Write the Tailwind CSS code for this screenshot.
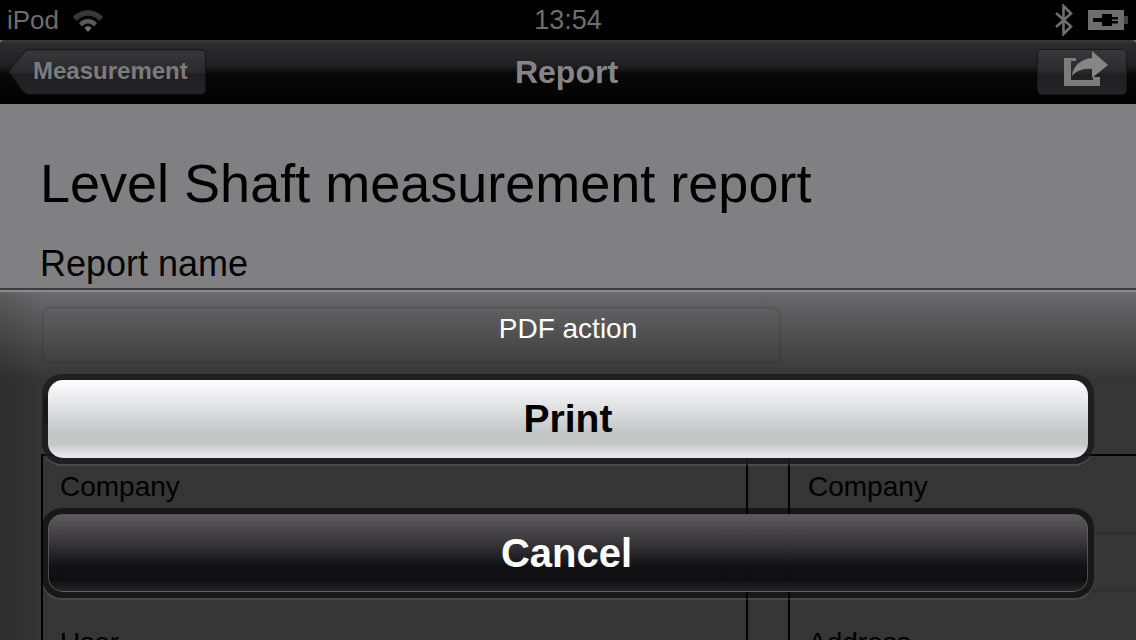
<!DOCTYPE html>
<html lang="en">
  <head>
    <meta charset="UTF-8" />
    <title>Report</title>
    <script src="https://cdn.jsdelivr.net/npm/@tailwindcss/browser@4"></script>
  </head>
  <body class="bg-black font-['Liberation_Sans',Arial,sans-serif]">
    <div class="relative w-[1136px] h-[640px] overflow-hidden flex flex-col bg-[#807f81]">
      <!-- Status bar -->
      <div class="h-10 shrink-0 bg-black flex items-center justify-between pl-[7px] pr-[8px] text-[#6e6e6e]">
        <div class="flex items-center gap-[13px]">
          <span class="text-[26px] leading-none">iPod</span>
          <svg width="32" height="24" viewBox="0 0 32 24" fill="currentColor">
            <path d="M1 9 C9 0 23 0 31 9 L27.5 13 C21 6 11 6 4.500 13 Z" fill="#383838" />
            <path d="M7 15 C12 9.500 20 9.500 25 15 L22 18.500 C18.500 14.500 13.500 14.500 10 18.500 Z" fill="#5a5a5a" />
            <path d="M12.500 20 C14.500 17.800 17.500 17.800 19.500 20 L16 24 Z" fill="#737373" />
          </svg>
        </div>
        <span class="absolute left-0 right-0 text-center text-[27px] leading-none">13:54</span>
        <div class="flex items-center gap-[14px]">
          <svg width="20" height="32" viewBox="0 0 20 32" fill="none" stroke="#6e6e6e" stroke-width="2.600">
            <path d="M2 9 L17 22.500 L9.500 30 V2 L17 9.500 L2 23" />
          </svg>
          <svg width="40" height="20" viewBox="0 0 40 20">
            <rect x="0" y="0" width="36" height="20" fill="#6e6e6e" />
            <rect x="36" y="6" width="4" height="8" fill="#454545" />
            <path d="M5 8 H14 V4 H24 V7 H30 V9.500 H24 V11 H30 V13.500 H24 V16 H14 V12 H5 Z" fill="#000" />
          </svg>
        </div>
      </div>

      <!-- Nav bar -->
      <div class="relative h-16 shrink-0 rounded-t-[4px] flex items-center justify-between pl-[8px] pr-[9px] bg-[linear-gradient(#3a393b_0px,#2c2b2d_4px,#201f21_26px,#070708_34px,#020202_100%)]">
        <div class="relative h-[46px] w-[198px]">
          <svg class="absolute inset-0" width="198" height="46" viewBox="0 0 198 46">
            <defs>
              <linearGradient id="back" x1="0" y1="0" x2="0" y2="1">
                <stop offset="0" stop-color="#38373a" />
                <stop offset="0.5" stop-color="#2a292b" />
                <stop offset="0.55" stop-color="#1f1e20" />
                <stop offset="1" stop-color="#252426" />
              </linearGradient>
            </defs>
            <path d="M0.500 23 L16 3 Q18 0.800 21 0.800 H192 Q197.500 0.800 197.500 5 V41 Q197.500 45.300 192 45.300 H21 Q18 45.300 16 43 Z" fill="url(#back)" stroke="#141315" stroke-width="1" />
          </svg>
          <span class="absolute left-[25px] top-[8px] text-[24px] leading-[28px] font-bold text-[#7c7c7c]">Measurement</span>
        </div>
        <span class="absolute left-0 right-0 pr-[3px] text-center text-[32px] leading-none font-bold text-[#858585] pointer-events-none">Report</span>
        <div class="h-[46px] w-[90px] rounded-[5px] border border-[#171618] flex items-start pl-[20px] bg-[linear-gradient(#38373a,#2a292b_50%,#1f1e20_55%,#252426)]">
          <svg width="52" height="44" viewBox="0 0 52 44" fill="#7c7c7c">
            <path d="M6 8 H18 V11 H13 V30 H35 V27 H42 V36 H6 Z" />
            <path d="M14 26 C15 15 24 9 34 8 V1 L50 15 L34 28 V19 C25 18 18 21 14 26 Z" fill="#868686" />
          </svg>
        </div>
      </div>

      <!-- Report page, dimmed behind the sheet -->
      <div class="flex-1 px-[41px] text-black">
        <h1 class="mt-[46px] -ml-px text-[54px] leading-[66px] whitespace-nowrap">Level Shaft measurement report</h1>
        <p class="mt-[28px] -ml-px text-[36px] leading-[40px] whitespace-nowrap">Report name</p>
        <div class="mt-[22px] w-[741px] h-[58px] rounded-[10px] border-[3px] border-[#767577]"></div>
        <p class="mt-[28px] text-[36px] leading-[40px] whitespace-nowrap">Data</p>
        <div class="mt-[22px] -mr-[41px] flex border-t-2 border-black">
          <div class="w-[707px] h-[300px] border-x-2 border-black pl-[17px] pr-[20px] pt-[14px]">
            <p class="text-[28px] leading-[34px]">Company</p>
            <div class="mt-[28px] h-[60px] rounded-[10px] border-[3px] border-[#767577]"></div>
            <p class="mt-[34px] text-[28px] leading-[34px]">User</p>
          </div>
          <div class="ml-[40px] flex-1 border-l-2 border-black pl-[18px] pt-[14px]">
            <p class="text-[28px] leading-[34px]">Company</p>
            <div class="mt-[28px] h-[60px] border-y-[3px] border-[#767577]"></div>
            <p class="mt-[34px] text-[28px] leading-[34px]">Address</p>
          </div>
        </div>
      </div>

      <!-- Action sheet -->
      <div class="absolute left-0 right-0 top-[288px] bottom-0 border-t-2 border-[#3c3b3d] bg-[linear-gradient(90deg,rgba(0,0,0,0.14),rgba(0,0,0,0)_44px),linear-gradient(rgba(0,0,0,0.12)_0px,rgba(0,0,0,0.2)_8px,rgba(0,0,0,0.58)_90px,rgba(0,0,0,0.58)_100%)] px-[42px]">
        <div class="-mx-[42px] h-[2px] bg-[#8a898b]"></div>
        <p class="mt-[20px] text-center text-[28px] leading-[34px] text-white">PDF action</p>
        <div class="mt-[28px] rounded-[20px] bg-[#1b1a1c]/85 p-[6px] shadow-[0_2px_0_rgba(255,255,255,0.1)]">
          <button class="w-full h-[78px] rounded-[15px] text-[39px] font-bold text-black bg-[linear-gradient(#fdfdfe,#f4f4f6_12%,#e0e1e2_35%,#c3c6c6_68%,#c6c8c8_82%,#e6e6e8_96%)]">Print</button>
        </div>
        <div class="mt-[44px] rounded-[20px] bg-black/55 p-[6px] shadow-[0_2px_0_rgba(255,255,255,0.1)]">
          <button class="w-full h-[78px] pr-[3px] rounded-[15px] border border-[#66656a]/70 text-[40px] font-bold text-white bg-[linear-gradient(rgba(96,94,97,0.95),rgba(58,56,59,0.9)_38%,rgba(16,15,17,0.9)_68%,rgba(16,15,17,0.92)_85%,rgba(38,37,39,0.95))]">Cancel</button>
        </div>
      </div>
    </div>
  </body>
</html>
